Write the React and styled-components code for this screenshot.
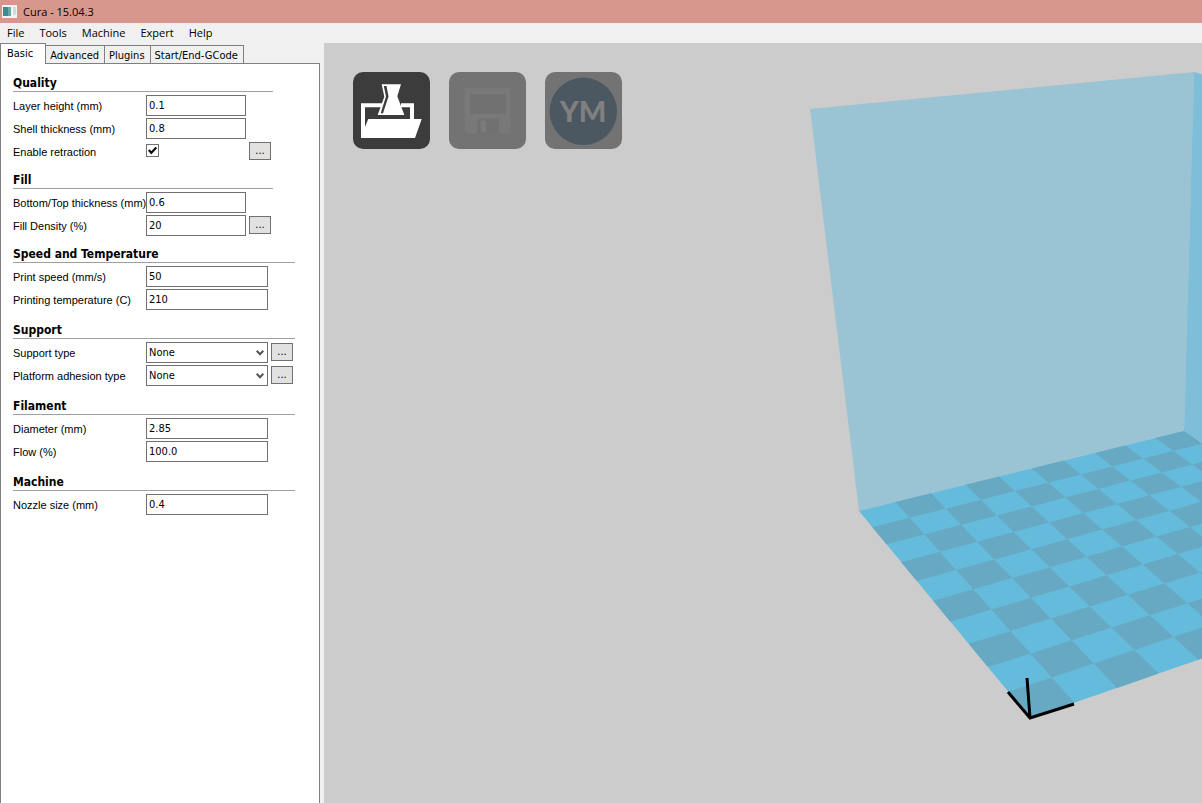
import React, { useState } from "react";
import styled, { createGlobalStyle } from "styled-components";

const colors = {
  title: "#d8978c",
  chrome: "#f0f0f0",
  border: "#7f7f7f",
  field: "#707070",
  rule: "#a0a0a0",
  button: "#e1e1e1",
  scene: "#cccccc",
  wallBack: "#9ac3d4",
  wallSide: "#7fbed8",
  tileLight: "#65bbdc",
  tileDark: "#67a9c3",
};

const GlobalStyle = createGlobalStyle`
  * {
    box-sizing: border-box;
  }

  body {
    margin: 0;
    background: ${colors.chrome};
    color: #000;
    font-family: "DejaVu Sans Condensed", "DejaVu Sans", Tahoma, sans-serif;
    font-size: 11px;
  }

  button, input, select {
    font: inherit;
    color: inherit;
  }
`;

const Window = styled.div`
  display: flex;
  flex-direction: column;
  min-height: 100vh;
`;

const TitleBar = styled.header`
  display: flex;
  align-items: center;
  gap: 5px;
  height: 23px;
  padding-left: 2px;
  background: ${colors.title};
  font-family: "Open Sans", sans-serif;
`;

const MenuBar = styled.nav`
  display: flex;
  align-items: center;
  gap: 15px;
  height: 20px;
  padding-left: 7px;
`;

const MenuItem = styled.button`
  padding: 0;
  border: none;
  background: none;
  font-family: "Open Sans", sans-serif;
  line-height: 20px;
`;

const Workspace = styled.div`
  display: flex;
  flex: 1;
`;

const Sidebar = styled.aside`
  display: flex;
  flex-direction: column;
  flex: none;
  width: 324px;
  padding-right: 4px;
`;

const TabList = styled.div`
  display: flex;
  align-items: flex-end;
  height: 21px;
  margin-bottom: -1px;
`;

const Tab = styled.button`
  height: ${({ $active }) => ($active ? "21px" : "18px")};
  margin-left: ${({ $active }) => ($active ? "0" : "-1px")};
  margin-bottom: ${({ $active }) => ($active ? "0" : "1px")};
  padding: ${({ $active }) => ($active ? "0 12px 1px 6px" : "1px 5px 0 4px")};
  border: 1px solid ${colors.border};
  border-bottom: none;
  background: ${({ $active }) => ($active ? "#fff" : colors.chrome)};
  white-space: nowrap;
  z-index: ${({ $active }) => ($active ? 1 : 0)};
`;

const Panel = styled.form`
  flex: 1;
  padding: 10px 12px;
  border: 1px solid ${colors.border};
  border-bottom: none;
  background: #fff;
`;

const Section = styled.section`
  width: ${({ $compact }) => ($compact ? "260px" : "282px")};
  margin-bottom: ${({ $compact }) => ($compact ? "9px" : "11px")};
`;

const SectionTitle = styled.h2`
  height: 18px;
  margin: 0 0 3px;
  border-bottom: 1px solid ${colors.rule};
  font-size: 12px;
  line-height: 19px;
`;

const Fields = styled.div`
  display: flex;
  flex-direction: column;
  gap: 2px;
`;

const Row = styled.div`
  display: grid;
  grid-template-columns: 130px ${({ $compact }) => ($compact ? "100px" : "122px")} 22px;
  column-gap: 3px;
  min-height: 21px;
`;

const Label = styled.label`
  padding-top: 1px;
  font-family: "Liberation Sans", Arial, sans-serif;
  line-height: 20px;
  white-space: nowrap;
`;

const TextInput = styled.input`
  width: 100%;
  height: 21px;
  padding: 0 2px;
  border: 1px solid ${colors.field};
  border-radius: 0;
  background: #fff;
`;

const SelectBox = styled.div`
  display: grid;
  align-items: center;
  height: 21px;

  > * {
    grid-area: 1 / 1;
  }

  svg {
    justify-self: end;
    margin-right: 4px;
    pointer-events: none;
  }
`;

const Select = styled.select`
  width: 100%;
  height: 21px;
  padding: 0 2px;
  border: 1px solid ${colors.field};
  border-radius: 0;
  background: #fff;
  appearance: none;
`;

const CheckBox = styled.div`
  display: grid;
  justify-content: start;
  padding: 3px 0 5px;

  > * {
    grid-area: 1 / 1;
  }

  svg {
    pointer-events: none;
  }
`;

const CheckInput = styled.input`
  width: 13px;
  height: 13px;
  margin: 0;
  border: 1px solid ${colors.field};
  background: #fff;
  appearance: none;
`;

const MoreButton = styled.button`
  height: 18px;
  margin-top: 1px;
  padding: 0;
  border: 1px solid ${colors.field};
  background: ${colors.button};
  line-height: 14px;
`;

const Viewport = styled.main`
  position: relative;
  flex: 1;
  overflow: hidden;
  background: ${colors.scene};
`;

const Scene = styled.svg`
  position: absolute;
  inset: 0;
  width: 100%;
  height: 100%;
`;

const Toolbar = styled.div`
  position: relative;
  display: flex;
  gap: 19px;
  padding: 29px;
`;

const ToolButton = styled.button`
  width: 77px;
  height: 77px;
  padding: 0;
  border: none;
  border-radius: 10px;
  background: ${({ $dim }) => ($dim ? "#737373" : "#3c3c3c")};

  svg {
    display: block;
  }
`;

const sections = [
  {
    title: "Quality",
    compact: true,
    fields: [
      { id: "layer", label: "Layer height (mm)", value: "0.1" },
      { id: "shell", label: "Shell thickness (mm)", value: "0.8" },
      { id: "retraction", label: "Enable retraction", type: "check", more: true },
    ],
  },
  {
    title: "Fill",
    compact: true,
    fields: [
      { id: "bottom", label: "Bottom/Top thickness (mm)", value: "0.6" },
      { id: "density", label: "Fill Density (%)", value: "20", more: true },
    ],
  },
  {
    title: "Speed and Temperature",
    fields: [
      { id: "speed", label: "Print speed (mm/s)", value: "50" },
      { id: "temperature", label: "Printing temperature (C)", value: "210" },
    ],
  },
  {
    title: "Support",
    fields: [
      { id: "support", label: "Support type", type: "select", more: true },
      { id: "adhesion", label: "Platform adhesion type", type: "select", more: true },
    ],
  },
  {
    title: "Filament",
    fields: [
      { id: "diameter", label: "Diameter (mm)", value: "2.85" },
      { id: "flow", label: "Flow (%)", value: "100.0" },
    ],
  },
  {
    title: "Machine",
    fields: [{ id: "nozzle", label: "Nozzle size (mm)", value: "0.4" }],
  },
];

const Control = ({ field }) => {
  const [checked, setChecked] = useState(true);

  if (field.type === "check") {
    return (
      <CheckBox>
        <CheckInput
          id={field.id}
          type="checkbox"
          checked={checked}
          onChange={(e) => setChecked(e.target.checked)}
        />
        {checked && (
          <svg width="13" height="13" viewBox="0 0 13 13" fill="none">
            <path d="M2.8 6 5.3 8.8 10.3 3.5" stroke="#111" strokeWidth="2.2" />
          </svg>
        )}
      </CheckBox>
    );
  }

  if (field.type === "select") {
    return (
      <SelectBox>
        <Select id={field.id}>
          <option>None</option>
        </Select>
        <svg width="8" height="6" viewBox="0 0 8 6" fill="none">
          <path d="M.7.8 4 4.3 7.3.8" stroke="#555" strokeWidth="2" />
        </svg>
      </SelectBox>
    );
  }

  return <TextInput id={field.id} type="text" defaultValue={field.value} />;
};

// perspective projection of the build plate, u along the back edge, v towards the viewer
const project = (u, v) => {
  const w = 0.0138 * u - 0.0233 * v + 1;
  const x = (48.84 * u - 6.9 * v + 859) / w - 324;
  const y = (-2.05 * u + 3.97 * v + 511) / w - 43;
  return `${x.toFixed(1)},${y.toFixed(1)}`;
};

const tiles = [];
for (let v = 0; v < 10; v++) {
  for (let u = 0; u < 10; u++) {
    if ((u + v) % 2 === 1) {
      tiles.push([project(u, v), project(u + 1, v), project(u + 1, v + 1), project(u, v + 1)].join(" "));
    }
  }
}

const floor = [project(0, 0), project(10, 0), project(10, 10), project(0, 10)].join(" ");

const BuildPlate = () => (
  <Scene viewBox="0 0 878 760" preserveAspectRatio="xMinYMin slice" aria-hidden="true">
    <polygon points="486,66 870,29 860,388 535,468" fill={colors.wallBack} />
    <polygon points={`870,29 1100,95 1030,500 ${project(10, 0)}`} fill={colors.wallSide} />
    <polygon points={floor} fill={colors.tileLight} />
    {tiles.map((points) => (
      <polygon key={points} points={points} fill={colors.tileDark} />
    ))}
    <path d="M684 649 706 675 750 661M706 675 703 635" fill="none" stroke="#000" strokeWidth="3" />
  </Scene>
);

const LoadIcon = () => (
  <svg width="77" height="77" viewBox="0 0 77 77">
    <path d="M8 31.3H29V35.3H12V54.7L15.3 47H57V35.3H48V31.3H61V47H68.7L62 66H8Z" fill="#fff" />
    <path d="M28.7 12.3H48L44.3 24.3 51.3 43H24.7L31.3 24.7Z" fill="#fff" />
    <path d="M30.8 14H33.5L35.5 24.5 30 41.3H27.7L33 24.5Z" fill="#3c3c3c" />
  </svg>
);

const SaveIcon = () => (
  <svg width="77" height="77" viewBox="0 0 77 77">
    <path d="M15.5 16H61.5V61.5H19L15.5 58Z" fill="#797979" />
    <path d="M21 22H57V42H21Z" fill="#717171" />
    <path d="M28.5 46.5H50V61.5H28.5Z" fill="#717171" />
    <path d="M31.7 48.5H36.7V60H31.7Z" fill="#7b7b7b" />
  </svg>
);

const YouMagineIcon = () => (
  <svg width="77" height="77" viewBox="0 0 77 77">
    <circle cx="38.3" cy="39.3" r="33.7" fill="#4b5861" />
    <text x="38" y="50" textAnchor="middle" fontFamily="Lato, sans-serif" fontSize="29" fontWeight="900" fill="#808080">
      YM
    </text>
  </svg>
);

const App = () => {
  const [tab, setTab] = useState("Basic");

  return (
    <>
      <GlobalStyle />
      <Window>
        <TitleBar>
          <svg width="16" height="13" viewBox="0 0 16 13">
            <path d="M0 0H15V13H0Z" fill="#f0f4f4" />
            <path d="M1 2H9V11H1Z" fill="#3f8a8c" />
            <path d="M6 2H9V11H6Z" fill="#68a9a4" />
            <path d="M11 2H14V10H11Z" fill="#cfdcdc" />
          </svg>
          <span>Cura - 15.04.3</span>
        </TitleBar>
        <MenuBar>
          {["File", "Tools", "Machine", "Expert", "Help"].map((item) => (
            <MenuItem key={item} type="button">{item}</MenuItem>
          ))}
        </MenuBar>
        <Workspace>
          <Sidebar>
            <TabList role="tablist">
              {["Basic", "Advanced", "Plugins", "Start/End-GCode"].map((name) => (
                <Tab
                  key={name}
                  type="button"
                  role="tab"
                  aria-selected={tab === name}
                  $active={tab === name}
                  onClick={() => setTab(name)}
                >
                  {name}
                </Tab>
              ))}
            </TabList>
            <Panel>
              {sections.map((section) => (
                <Section key={section.title} $compact={section.compact}>
                  <SectionTitle>{section.title}</SectionTitle>
                  <Fields>
                    {section.fields.map((field) => (
                      <Row key={field.id} $compact={section.compact}>
                        <Label htmlFor={field.id}>{field.label}</Label>
                        <Control field={field} />
                        {field.more && <MoreButton type="button">...</MoreButton>}
                      </Row>
                    ))}
                  </Fields>
                </Section>
              ))}
            </Panel>
          </Sidebar>
          <Viewport>
            <BuildPlate />
            <Toolbar>
              <ToolButton type="button" aria-label="Load">
                <LoadIcon />
              </ToolButton>
              <ToolButton type="button" aria-label="Save" $dim>
                <SaveIcon />
              </ToolButton>
              <ToolButton type="button" aria-label="YouMagine" $dim>
                <YouMagineIcon />
              </ToolButton>
            </Toolbar>
          </Viewport>
        </Workspace>
      </Window>
    </>
  );
};

export default App;
